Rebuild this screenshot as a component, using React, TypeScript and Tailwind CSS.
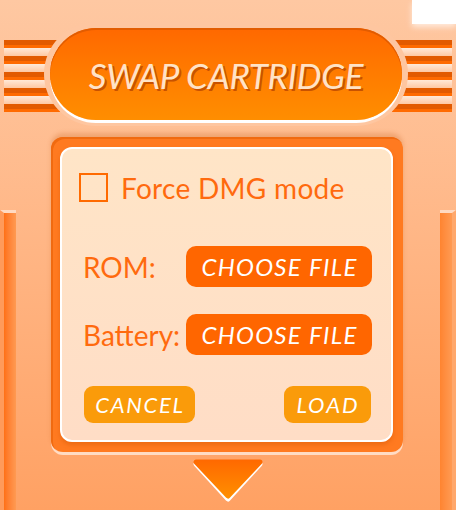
import React from "react";

function Stripes({ side }: { side: "left" | "right" }) {
  const rows = [0, 1, 2, 3, 4];
  return (
    <div className={side === "left" ? "w-[56px] mt-[12px] flex flex-col" : "w-[60px] mt-[12px] flex flex-col"}>
      {rows.map((i) => (
        <div key={i} className="flex flex-col">
          <div className="h-[5px] bg-[#e25a00]" />
          <div className="h-[3px] bg-[#ff6a00]" />
          {i < 4 && <div className="h-[8px] bg-gradient-to-b from-[#ffe9d8] to-[#fec8a3]" />}
        </div>
      ))}
    </div>
  );
}

function ChooseButton() {
  return (
    <div className="w-[186px] h-[41px] rounded-[10px] bg-[#ff6600] flex items-center justify-center">
      <span className="italic text-white text-[24px] leading-none tracking-[1.3px] pl-[1px]">CHOOSE FILE</span>
    </div>
  );
}

export default function App() {
  return (
    <div className="relative w-[456px] h-[510px] overflow-hidden bg-gradient-to-b from-[#fec8a2] to-[#ffa163] font-['Lato','Noto_Sans',sans-serif]">
      <div className="absolute top-0 right-0 w-[44px] h-[24px] bg-white shadow-[0_3px_6px_rgba(255,240,230,0.9)]" />

      {/* header */}
      <div className="flex items-start pt-[28px] pl-[4px]">
        <Stripes side="left" />
        <div className="relative z-10 -mx-[10px] w-[352px] h-[92px] shrink-0 rounded-full bg-gradient-to-b from-[#ff6800] to-[#ff8e00] shadow-[inset_0_2px_0_#e25c00,0_3px_0_#ffffff,0_0_0_6px_#fec6a0] flex items-center justify-center">
          <span className="italic text-[35px] leading-none tracking-[-0.3px] text-[#ffe3c6] [text-shadow:2px_2px_0_#c85200] pt-[3px]">
            SWAP CARTRIDGE
          </span>
        </div>
        <Stripes side="right" />
      </div>

      {/* body */}
      <div className="flex mt-[17px] h-[373px]">
        <div className="w-[16px] mt-[73px] border-l-4 border-l-[#ff9a5a] border-t-[3px] border-t-[#ffdac2] bg-gradient-to-r from-[#ff7014] to-[#ff9a52]" />

        <div className="ml-[35px] w-[352px] flex flex-col items-center">
          <div className="w-[352px] h-[315px] rounded-[12px] bg-[#ff7a20] pt-[10px] pl-[9px] pr-[10px] pb-[10px] shadow-[0_-4px_4px_rgba(205,105,40,0.3),0_3px_0_#ffdcc4,inset_2px_2px_0_#f06a10]">
            <div className="h-full rounded-[12px] border-2 border-white bg-gradient-to-b from-[#ffe5c7] to-[#ffddc6] shadow-[0_3px_4px_rgba(200,80,0,0.35)] pl-[17px] pr-[19px] pt-[24px]">
              <div className="flex items-center gap-[13px]">
                <div className="w-[29px] h-[29px] border-2 border-[#ff6a00]" />
                <span className="text-[#ff6a0e] text-[28px] leading-none tracking-[0.3px]">Force DMG mode</span>
              </div>

              <div className="flex items-center mt-[44px] ml-[4px]">
                <span className="w-[103px] text-[#ff6a0e] text-[28px] leading-none">ROM:</span>
                <ChooseButton />
              </div>

              <div className="flex items-center mt-[27px] ml-[4px]">
                <span className="w-[103px] text-[#ff6a0e] text-[28px] leading-none">Battery:</span>
                <ChooseButton />
              </div>

              <div className="flex justify-between mt-[31px] ml-[5px] mr-[1px]">
                <div className="w-[111px] h-[37px] rounded-[9px] bg-[#fa9b0a] flex items-center justify-center">
                  <span className="italic text-white text-[22px] leading-none tracking-[1.7px] pl-[1px]">CANCEL</span>
                </div>
                <div className="w-[87px] h-[37px] rounded-[9px] bg-[#fa9b0a] flex items-center justify-center">
                  <span className="italic text-white text-[22px] leading-none tracking-[2px] pl-[1px]">LOAD</span>
                </div>
              </div>
            </div>
          </div>

          <svg className="mt-[7px] ml-[2px]" width="74" height="44" viewBox="0 0 74 44">
            <defs>
              <linearGradient id="arr" x1="0" y1="0" x2="0" y2="40" gradientUnits="userSpaceOnUse">
                <stop offset="0" stopColor="#ff6800" />
                <stop offset="1" stopColor="#ff9000" />
              </linearGradient>
            </defs>
            <polygon points="5,5 69,5 37,40" fill="#ffffff" stroke="#ffffff" strokeWidth="5" strokeLinejoin="round" />
            <polygon points="5,3 69,3 37,37" fill="url(#arr)" stroke="url(#arr)" strokeWidth="5" strokeLinejoin="round" />
          </svg>
        </div>

        <div className="ml-[37px] w-[16px] mt-[73px] border-r-4 border-r-[#ffa86c] border-t-[3px] border-t-[#ffdac2] bg-gradient-to-r from-[#ff8430] to-[#ff9a52]" />
      </div>
    </div>
  );
}
